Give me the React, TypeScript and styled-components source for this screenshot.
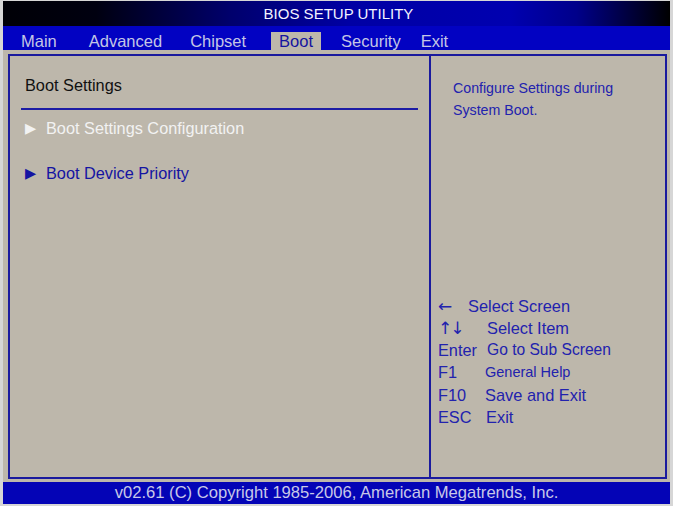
import React from 'react';
import styled, { createGlobalStyle } from 'styled-components';

const GlobalStyle = createGlobalStyle`
  html, body {
    margin: 0;
    padding: 0;
    background: #d6d6d6;
  }
  body {
    font-family: "Liberation Sans", Arial, sans-serif;
  }
`;

const tabs = [
  { label: 'Main', ml: 10 },
  { label: 'Advanced', ml: 16 },
  { label: 'Chipset', ml: 12 },
  { label: 'Boot', ml: 17, active: true },
  { label: 'Security', ml: 12 },
  { label: 'Exit', ml: 4 },
];

const legend = [
  { key: '\u2190', desc: 'Select Screen', w: 30, glyph: true },
  { key: '\u2191\u2193', desc: 'Select Item', w: 49, glyph: true },
  { key: 'Enter', desc: 'Go to Sub Screen', w: 49, size: 15.6 },
  { key: 'F1', desc: 'General Help', w: 47, size: 14.5 },
  { key: 'F10', desc: 'Save and Exit', w: 47 },
  { key: 'ESC', desc: 'Exit', w: 48 },
];

export default function App() {
  return (
    <>
      <GlobalStyle />
      <Screen>
        <TitleBar>BIOS SETUP UTILITY</TitleBar>
        <MenuBar>
          {tabs.map((t) => (
            <Tab key={t.label} $ml={t.ml} $active={!!t.active}>
              {t.label}
            </Tab>
          ))}
        </MenuBar>
        <Body>
          <Frame>
            <LeftPane>
              <Heading>Boot Settings</Heading>
              <Rule />
              <SubMenu $first>
                <Pointer>▶</Pointer>Boot Settings Configuration
              </SubMenu>
              <SubMenu $first={false} $dim>
                <Pointer>▶</Pointer>Boot Device Priority
              </SubMenu>
            </LeftPane>
            <Divider />
            <RightPane>
              <Info>
                Configure Settings during
                <br />
                System Boot.
              </Info>
              <Legend>
                {legend.map((l) => (
                  <LegendRow key={l.desc}>
                    <KeyName $w={l.w} $glyph={!!l.glyph}>{l.key}</KeyName>
                    <KeyDesc $size={l.size ?? 16.4}>{l.desc}</KeyDesc>
                  </LegendRow>
                ))}
              </Legend>
            </RightPane>
          </Frame>
        </Body>
        <Footer>v02.61 (C) Copyright 1985-2006, American Megatrends, Inc.</Footer>
      </Screen>
    </>
  );
}

const Screen = styled.div`
  width: 667px;
  margin: 1px 0 0 3px;
  display: flex;
  flex-direction: column;
`;

const TitleBar = styled.div`
  height: 25px;
  line-height: 25px;
  text-align: center;
  padding-left: 4px;
  color: #f4f4ff;
  font-size: 15px;
  background: linear-gradient(
    to right,
    #000006 0%,
    #000010 14%,
    #00006c 34%,
    #0000a4 52%,
    #0000b0 76%,
    #00008a 86%,
    #000000 100%
  );
`;

const MenuBar = styled.div`
  height: 24px;
  display: flex;
  align-items: flex-end;
  background: #0202c2;
`;

const Tab = styled.div<{ $ml: number; $active: boolean }>`
  margin-left: ${(p) => p.$ml}px;
  height: 20px;
  line-height: 19px;
  padding: 0 8px 0 8px;
  font-size: 16.5px;
  color: ${(p) => (p.$active ? '#1414a0' : '#c4c6e6')};
  background: ${(p) => (p.$active ? '#bdb7ab' : 'transparent')};
  margin-bottom: -2px;
  position: relative;
`;

const Body = styled.div`
  background: #bdb7ab;
  padding: 4px 3px 3px 5px;
`;

const Frame = styled.div`
  height: 425px;
  box-sizing: border-box;
  border: 2px solid #1a1a9e;
  display: grid;
  grid-template-columns: 419px 2px 1fr;
`;

const LeftPane = styled.div`
  padding: 19px 11px 0 15px;
  display: flex;
  flex-direction: column;
`;

const Heading = styled.div`
  font-size: 16.3px;
  line-height: 20px;
  color: #111;
`;

const Rule = styled.div`
  height: 2px;
  margin: 13px 0 0 -4px;
  background: #1c1ca4;
`;

const SubMenu = styled.div<{ $first: boolean; $dim?: boolean }>`
  margin-top: ${(p) => (p.$first ? 8 : 25)}px;
  font-size: 16.3px;
  line-height: 20px;
  color: ${(p) => (p.$dim ? '#1414a2' : '#f2f2f2')};
  display: flex;
`;

const Pointer = styled.span`
  width: 21px;
  font-family: "DejaVu Sans", sans-serif;
  font-size: 14.5px;
`;

const Divider = styled.div`
  background: #1a1a9e;
`;

const RightPane = styled.div`
  padding: 21px 0 49px 7px;
  display: flex;
  flex-direction: column;
  justify-content: space-between;
`;

const Info = styled.div`
  margin-left: 15px;
  font-size: 14.2px;
  line-height: 22px;
  color: #2222ae;
`;

const Legend = styled.div`
  display: flex;
  flex-direction: column;
  color: #2222ae;
`;

const LegendRow = styled.div`
  display: flex;
  height: 22.2px;
  line-height: 22px;
  white-space: nowrap;
`;

const KeyName = styled.span<{ $w: number; $glyph: boolean }>`
  width: ${(p) => p.$w}px;
  font-family: ${(p) => (p.$glyph ? '"DejaVu Sans", sans-serif' : 'inherit')};
  font-size: ${(p) => (p.$glyph ? 17 : 16.3)}px;
  letter-spacing: ${(p) => (p.$glyph ? -2 : 0)}px;
`;

const KeyDesc = styled.span<{ $size: number }>`
  font-size: ${(p) => p.$size}px;
`;

const Footer = styled.div`
  height: 22px;
  line-height: 22px;
  text-align: center;
  font-size: 16.6px;
  color: #c8c8e8;
  background: #0404b6;
`;
